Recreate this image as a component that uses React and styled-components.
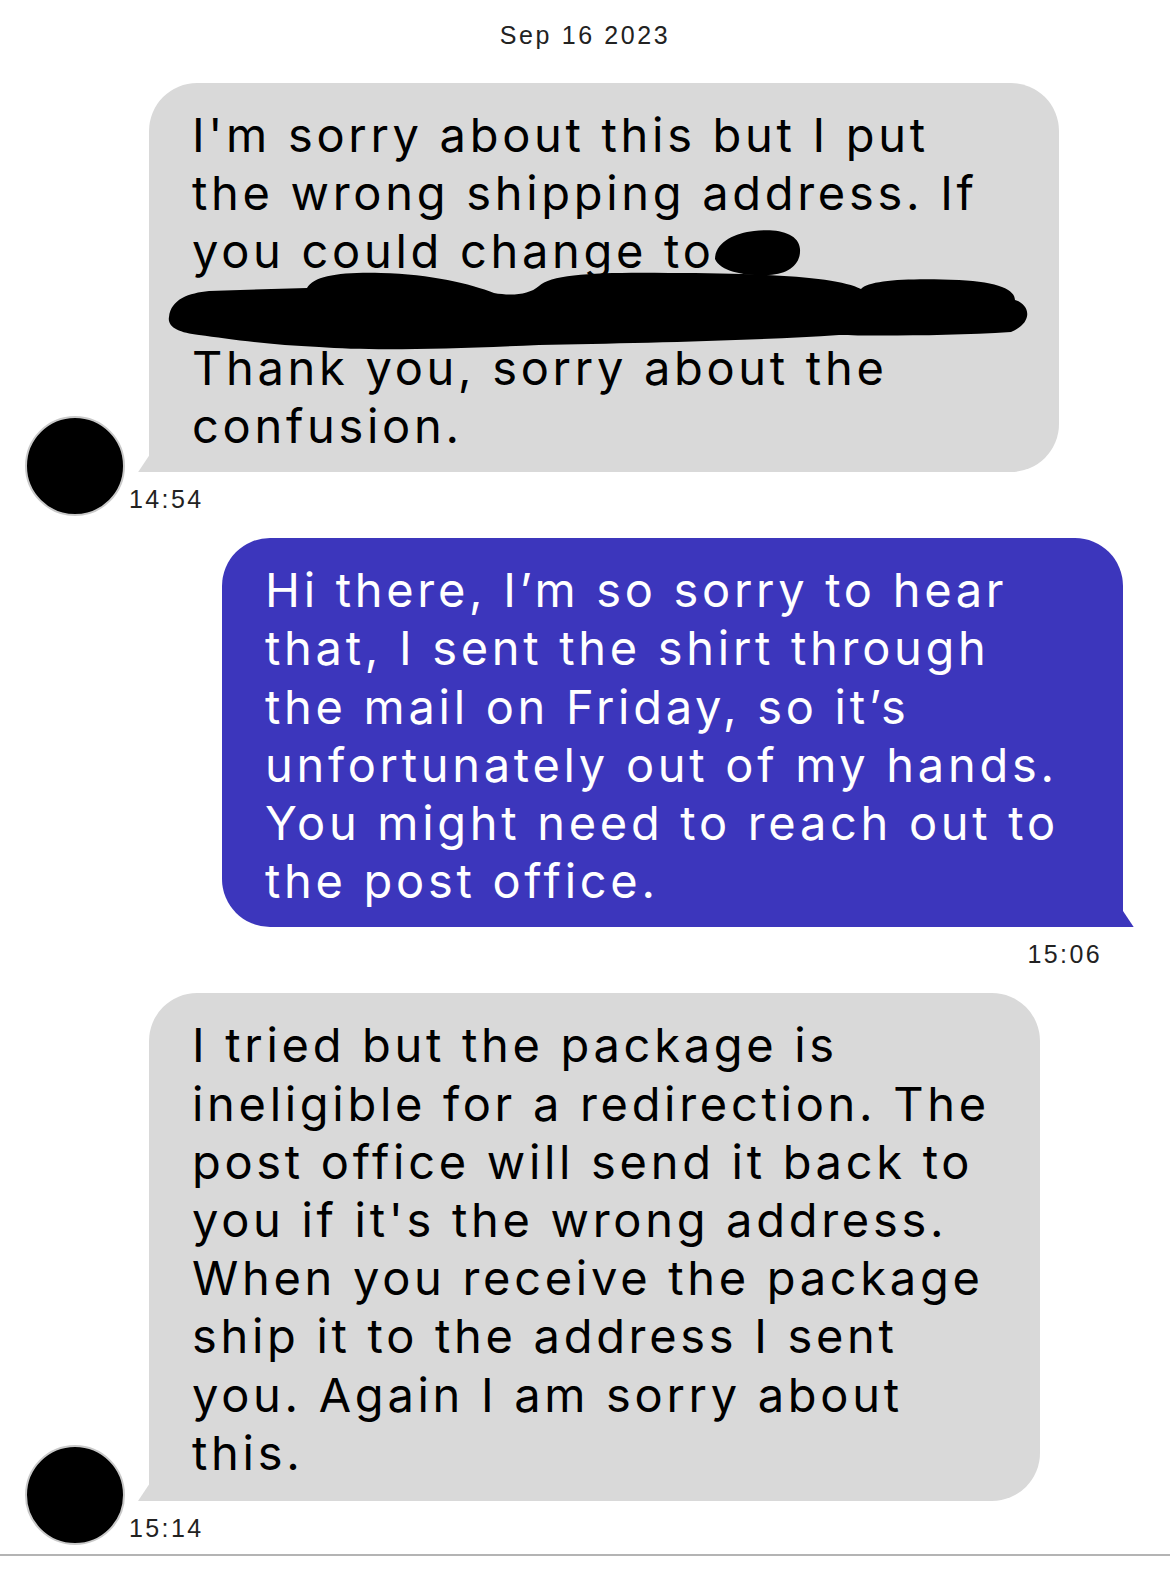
import React from 'react';
import styled, {createGlobalStyle} from 'styled-components';

const GlobalStyle = createGlobalStyle`
  body {
    margin: 0;
    background: #fff;
  }
`;

const Page = styled.div`
  width: 1170px;
  min-height: 1582px;
  background: #fff;
  padding-top: 20px;
  box-sizing: border-box;
`;

const DateLabel = styled.div`
  text-align: center;
  font-family: "Liberation Sans", Arial, sans-serif;
  font-size: 25px;
  letter-spacing: 2.6px;
  line-height: 30px;
  color: #222;
  margin-bottom: 33px;
`;

const Thread = styled.div`
  display: flex;
  flex-direction: column;
  gap: 25px;
  padding: 0 47px 0 25px;
`;

const IncomingRow = styled.div`
  display: flex;
  align-items: flex-end;
  gap: 4px;
`;

const Avatar = styled.div`
  width: 100px;
  height: 100px;
  flex-shrink: 0;
  box-sizing: border-box;
  border-radius: 50%;
  background: #000;
  border: 2px solid #c9c9c9;
  margin-bottom: -3px;
`;

const Column = styled.div`
  display: flex;
  flex-direction: column;
  align-items: ${(p) => (p.out ? 'flex-end' : 'flex-start')};
`;

const Bubble = styled.div`
  position: relative;
  width: ${(p) => p.w}px;
  box-sizing: border-box;
  margin-left: ${(p) => (p.out ? 0 : 20)}px;
  padding: 23px 0 ${(p) => p.pb || 17}px 43px;
  background: ${(p) => (p.out ? '#3c36bc' : '#d9d9d9')};
  color: ${(p) => (p.out ? '#fff' : '#000')};
  border-radius: ${(p) => (p.out ? '48px 48px 0 48px' : '48px 48px 48px 0')};
  font-family: Inter, "Noto Sans", sans-serif;
  font-size: 47px;
  letter-spacing: 3.7px;
  line-height: 58.2px;
  white-space: nowrap;

  &::before {
    content: '';
    position: absolute;
    bottom: 0;
    width: 12px;
    height: 18px;
    background: inherit;
    ${(p) => (p.out
    ? 'right: -11px; clip-path: polygon(0 0, 100% 100%, 0 100%);'
    : 'left: -11px; clip-path: polygon(100% 0, 100% 100%, 0 100%);')}
  }
`;

const Redaction = styled.svg`
  position: absolute;
  left: 0;
  top: 0;
  overflow: visible;
`;

const Stamp = styled.div`
  font-family: "Liberation Sans", Arial, sans-serif;
  font-size: 25px;
  letter-spacing: 2.4px;
  line-height: 28px;
  color: #222;
  margin-top: 13px;
  margin-right: ${(p) => (p.out ? 21 : 0)}px;
`;

const Separator = styled.div`
  height: 2px;
  background: #b4b4b4;
  margin-top: 12px;
`;

const Lines = ({lines}) => lines.map((l, i) => (
  <React.Fragment key={i}>
    {l}
    {i < lines.length - 1 && <br />}
  </React.Fragment>
));

const Scribble = () => (
  <Redaction width="910" height="388" viewBox="0 0 910 388">
    <path
      fill="#000"
      d="M 566 176 C 566 160, 585 150, 605 148 C 628 145, 650 150, 651 166 C 652 181, 640 191, 620 192 C 600 193, 572 190, 566 176 Z"
    />
    <path
      fill="#000"
      d="M 20 234 C 22 216, 40 210, 60 208 L 158 205 C 165 193, 190 189, 232 190 C 282 191, 322 201, 345 210 C 362 213, 380 212, 390 203 C 402 191, 452 189, 520 190 C 620 190, 690 194, 712 206 C 720 197, 760 195, 810 197 C 850 199, 866 207, 866 217 C 882 222, 884 240, 862 249 C 800 253, 720 253, 690 252 C 600 258, 480 260, 390 262 C 300 266, 220 268, 170 264 C 120 262, 80 256, 50 252 C 30 250, 18 244, 20 234 Z"
    />
  </Redaction>
);

const first = [
  "I'm sorry about this but I put",
  'the wrong shipping address. If',
  'you could change to',
  '\u00a0',
  'Thank you, sorry about the',
  'confusion.',
];

const reply = [
  'Hi there, I\u2019m so sorry to hear',
  'that, I sent the shirt through',
  'the mail on Friday, so it\u2019s',
  'unfortunately out of my hands.',
  'You might need to reach out to',
  'the post office.',
];

const second = [
  'I tried but the package is',
  'ineligible for a redirection. The',
  'post office will send it back to',
  "you if it's the wrong address.",
  'When you receive the package',
  'ship it to the address I sent',
  'you. Again I am sorry about',
  'this.',
];

const App = () => (
  <Page>
    <GlobalStyle />
    <DateLabel>Sep 16 2023</DateLabel>
    <Thread>
      <IncomingRow>
        <Avatar />
        <Column>
          <Bubble w={910}>
            <Lines lines={first} />
            <Scribble />
          </Bubble>
          <Stamp>14:54</Stamp>
        </Column>
      </IncomingRow>
      <Column out>
        <Bubble out w={901}>
          <Lines lines={reply} />
        </Bubble>
        <Stamp out>15:06</Stamp>
      </Column>
      <IncomingRow>
        <Avatar />
        <Column>
          <Bubble w={891} pb={19}>
            <Lines lines={second} />
          </Bubble>
          <Stamp>15:14</Stamp>
        </Column>
      </IncomingRow>
    </Thread>
    <Separator />
  </Page>
);

export default App;
